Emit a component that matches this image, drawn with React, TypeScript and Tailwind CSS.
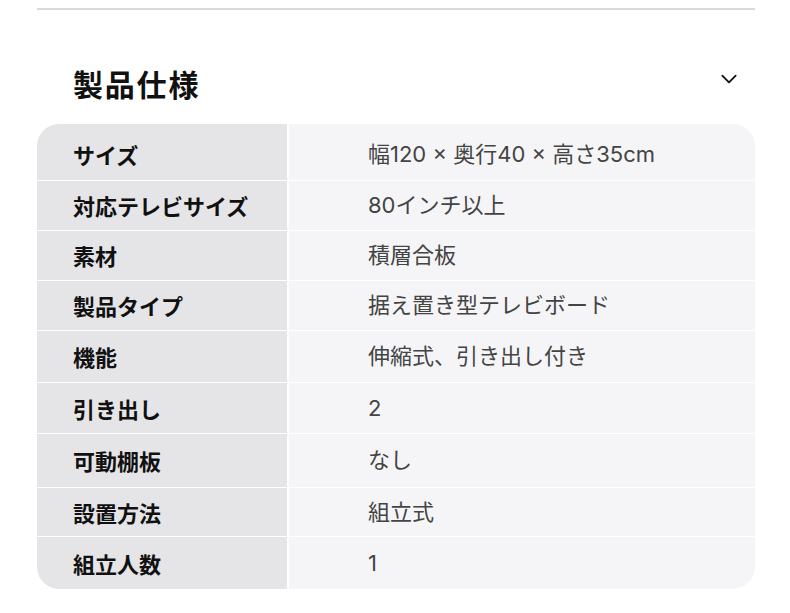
import React from "react";

const specs: { label: string; value: string; h: string }[] = [
  { label: "サイズ", value: "幅120 × 奥行40 × 高さ35cm", h: "h-[56px]" },
  { label: "対応テレビサイズ", value: "80インチ以上", h: "h-[49px]" },
  { label: "素材", value: "積層合板", h: "h-[49px]" },
  { label: "製品タイプ", value: "据え置き型テレビボード", h: "h-[49px]" },
  { label: "機能", value: "伸縮式、引き出し付き", h: "h-[51px]" },
  { label: "引き出し", value: "2", h: "h-[50px]" },
  { label: "可動棚板", value: "なし", h: "h-[53px]" },
  { label: "設置方法", value: "組立式", h: "h-[48px]" },
  { label: "組立人数", value: "1", h: "h-[52px]" },
];

const App = () => {
  return (
    <div
      className="w-[790px] h-[613px] bg-white overflow-hidden"
      style={{ fontFamily: '"Noto Sans CJK JP", "Noto Sans", sans-serif' }}
    >
      <div className="pl-[37px] pr-[35px] pt-2">
        <div className="h-[2px] bg-[#d9d9d9]" />
        <div className="flex items-center justify-between h-[114px] pl-9 pr-4">
          <h2 className="text-[30px] font-bold text-[#111] tracking-[1.8px] mt-[32px]">
            製品仕様
          </h2>
          <svg
            width="20"
            height="20"
            viewBox="0 0 24 24"
            fill="none"
            stroke="#111"
            strokeWidth="2.2"
            strokeLinecap="round"
            strokeLinejoin="round"
            className="mt-[24px]"
          >
            <path d="M4 8l8 8 8-8" />
          </svg>
        </div>
        <div className="rounded-[22px] overflow-hidden flex flex-col gap-[1px] bg-white">
          {specs.map((s, i) => (
            <div key={s.label} className={`flex gap-[2px] ${s.h}`}>
              <div
                className={`w-[250px] bg-[#e5e5e8] flex items-center pl-9 text-[22px] font-bold text-[#111] ${i === 0 ? "pt-[4px]" : ""}`}
              >
                {s.label}
              </div>
              <div
                className={`flex-1 bg-[#f5f5f7] flex items-center pl-[79px] text-[22px] text-[#444] ${i === 0 ? "pt-[4px]" : ""}`}
                style={{ fontFamily: '"Inter", "Noto Sans CJK JP", sans-serif' }}
              >
                {s.value}
              </div>
            </div>
          ))}
        </div>
      </div>
    </div>
  );
};

export default App;
